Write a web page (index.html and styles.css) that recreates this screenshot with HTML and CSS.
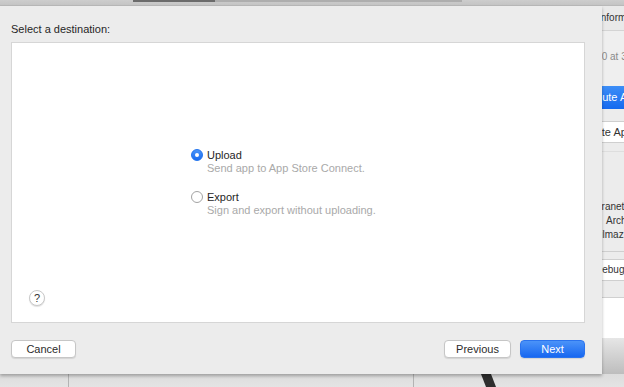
FILE: index.html
```html
<!DOCTYPE html>
<html lang="en">

<head>
    <meta charset="UTF-8">
    <meta name="viewport" content="width=device-width, initial-scale=1.0">
    <title>Select a destination</title>
    <link rel="stylesheet" href="styles.css">
</head>

<body>
    <div class="topbar">
        <span class="tab-dark"></span>
        <span class="tab-light"></span>
    </div>

    <div class="main">
        <div class="sheet">
            <div class="sheet-title">Select a destination:</div>

            <div class="panel">
                <div class="options">
                    <label class="option">
                        <span class="radio checked"></span>
                        <span class="option-text">
                            <span class="option-name">Upload</span>
                            <span class="option-desc">Send app to App Store Connect.</span>
                        </span>
                    </label>
                    <label class="option">
                        <span class="radio"></span>
                        <span class="option-text">
                            <span class="option-name">Export</span>
                            <span class="option-desc">Sign and export without uploading.</span>
                        </span>
                    </label>
                </div>
                <div class="help">?</div>
            </div>

            <div class="footer">
                <button class="btn">Cancel</button>
                <div class="footer-right">
                    <button class="btn btn-prev">Previous</button>
                    <button class="btn btn-primary">Next</button>
                </div>
            </div>
        </div>

        <div class="side">
            <div class="side-head"><span class="clip clip-a">Information</span></div>
            <div class="side-date"><span class="clip clip-b">2020 at 3:41 PM</span></div>
            <div class="side-blue"><span class="clip clip-c">Distribute App</span></div>
            <div class="side-btn"><span class="clip clip-d">Validate App</span></div>
            <div class="side-gap"></div>
            <div class="side-rows">
                <div class="side-row"><span class="clip clip-e">intranet.app</span></div>
                <div class="side-row"><span class="clip clip-f">Archive</span></div>
                <div class="side-row"><span class="clip clip-g">Yilmaz</span></div>
            </div>
            <div class="side-field"><span class="clip clip-h">Debug Symbols</span></div>
            <div class="side-gap2"></div>
            <div class="side-white"></div>
            <div class="side-fade"></div>
        </div>
    </div>

    <div class="bottom">
        <div class="bottom-a"></div>
        <div class="bottom-b"></div>
        <div class="bottom-c">
            <svg class="cable" width="20" height="13" viewBox="0 0 20 13">
                <path d="M2 0 L12 0 L17 13 L7 13 Z" fill="#2e2e2e"/>
            </svg>
        </div>
    </div>
</body>

</html>
```

FILE: styles.css
```css
* {
    box-sizing: border-box;
}

body {
    margin: 0;
    width: 624px;
    height: 387px;
    overflow: hidden;
    background-color: #d8d8d8;
    font-family: 'Liberation Sans', Arial, sans-serif;
    font-size: 11px;
    color: #2b2b2b;
}

/* window strip behind the sheet */
.topbar {
    height: 6px;
    display: flex;
    padding-left: 133px;
    background: linear-gradient(#cdcdcd, #c4c4c4);
    border-bottom: 1px solid #b9b9b9;
}

.tab-dark {
    width: 82px;
    height: 2px;
    background-color: #6b6b6b;
}

.tab-light {
    width: 247px;
    height: 2px;
    background-color: #aeaeae;
}

.main {
    display: flex;
    height: 368px;
}

/* the sheet */
.sheet {
    position: relative;
    z-index: 1;
    width: 602px;
    flex-shrink: 0;
    background-color: #ececec;
    padding: 17px 17px 16px 11px;
    box-shadow: 0 2px 3px rgba(0, 0, 0, 0.28);
    display: flex;
    flex-direction: column;
}

.sheet-title {
    line-height: 13px;
    height: 13px;
    margin-bottom: 6px;
    color: #262626;
}

.panel {
    height: 281px;
    background: #ffffff;
    border: 1px solid #d6d6d6;
    display: flex;
    flex-direction: column;
    padding: 106px 0 16px 17px;
}

.options {
    display: flex;
    flex-direction: column;
    gap: 16px;
    padding-left: 162px;
}

.option {
    display: flex;
    gap: 4px;
}

.radio {
    width: 12px;
    height: 12px;
    border-radius: 50%;
    border: 1px solid #a3a3a3;
    background: #ffffff;
    flex-shrink: 0;
    display: flex;
    align-items: center;
    justify-content: center;
}

.radio.checked {
    border-color: #1f73ee;
    background: linear-gradient(#4a94f8, #1a6cf0);
}

.radio.checked::after {
    content: "";
    width: 4px;
    height: 4px;
    border-radius: 50%;
    background: #ffffff;
}

.option-text {
    display: flex;
    flex-direction: column;
    margin-top: -1px;
}

.option-name {
    line-height: 14px;
    color: #262626;
}

.option-desc {
    line-height: 13px;
    color: #a9a9a9;
}

.help {
    margin-top: auto;
    width: 16px;
    height: 16px;
    border-radius: 50%;
    border: 1px solid #c9c9c9;
    background: #ffffff;
    box-shadow: 0 1px 1px rgba(0, 0, 0, 0.12);
    font-size: 11px;
    line-height: 14px;
    text-align: center;
    color: #333333;
}

.footer {
    margin-top: 17px;
    display: flex;
    justify-content: space-between;
}

.footer-right {
    display: flex;
    gap: 9px;
}

.btn {
    height: 18px;
    width: 65px;
    padding: 0;
    border: 1px solid #c6c6c6;
    border-radius: 4px;
    background: #ffffff;
    box-shadow: 0 1px 1px rgba(0, 0, 0, 0.1);
    font-family: 'Liberation Sans', Arial, sans-serif;
    font-size: 11px;
    color: #2b2b2b;
}

.btn-prev {
    width: 67px;
}

.btn-primary {
    border-color: #2a73ee;
    background: linear-gradient(#4b93f8, #1767f0);
    color: #ffffff;
}

/* window showing to the right */
.side {
    flex: 1;
    overflow: hidden;
    display: flex;
    flex-direction: column;
    background-color: #ececec;
    font-size: 10px;
    white-space: nowrap;
}

.clip {
    display: block;
}

.clip-a { margin-left: -4px; }
.clip-b { margin-left: -17px; }
.clip-c { margin-left: -31px; }
.clip-d { margin-left: -30px; }
.clip-e { margin-left: -11px; }
.clip-f { margin-left: 4px; }
.clip-g { margin-left: -8px; }
.clip-h { margin-left: -7px; }

.side-head {
    height: 25px;
    padding-top: 6px;
    background: #e9e9e9;
    border-bottom: 1px solid #d4d4d4;
    color: #333333;
}

.side-date {
    height: 55px;
    padding-top: 20px;
    background: #efefef;
    color: #8a8a8a;
}

.side-blue {
    height: 23px;
    padding-top: 5px;
    background: linear-gradient(#3d8ef7, #1469ef);
    color: #ffffff;
    font-size: 11px;
}

.side-btn {
    height: 22px;
    margin-top: 12px;
    padding-top: 4px;
    background: #ffffff;
    border-top: 1px solid #cfcfcf;
    border-bottom: 1px solid #cfcfcf;
    color: #333333;
    font-size: 11px;
}

.side-gap {
    height: 50px;
    border-top: 1px solid #dedede;
    margin-top: 8px;
}

.side-rows {
    display: flex;
    flex-direction: column;
    gap: 3px;
    height: 51px;
    color: #333333;
    border-bottom: 1px solid #cfcfcf;
}

.side-field {
    height: 22px;
    margin-top: 7px;
    padding-top: 4px;
    background: #ffffff;
    border-top: 1px solid #cfcfcf;
    border-bottom: 1px solid #cfcfcf;
    color: #333333;
}

.side-gap2 {
    height: 17px;
    border-bottom: 1px solid #d0d0d0;
}

.side-white {
    height: 40px;
    background: #ffffff;
}

.side-fade {
    flex: 1;
    background: linear-gradient(#e6e6e6, #bdbdbd);
}

/* strip below the sheet */
.bottom {
    height: 13px;
    display: flex;
    background: linear-gradient(#dcdcdc, #e4e4e4);
}

.bottom-a {
    width: 68px;
}

.bottom-b {
    width: 345px;
    border-left: 1px solid #b3b3b3;
}

.bottom-c {
    flex: 1;
    border-left: 1px solid #b3b3b3;
    padding-left: 65px;
}

.cable {
    display: block;
}
```
